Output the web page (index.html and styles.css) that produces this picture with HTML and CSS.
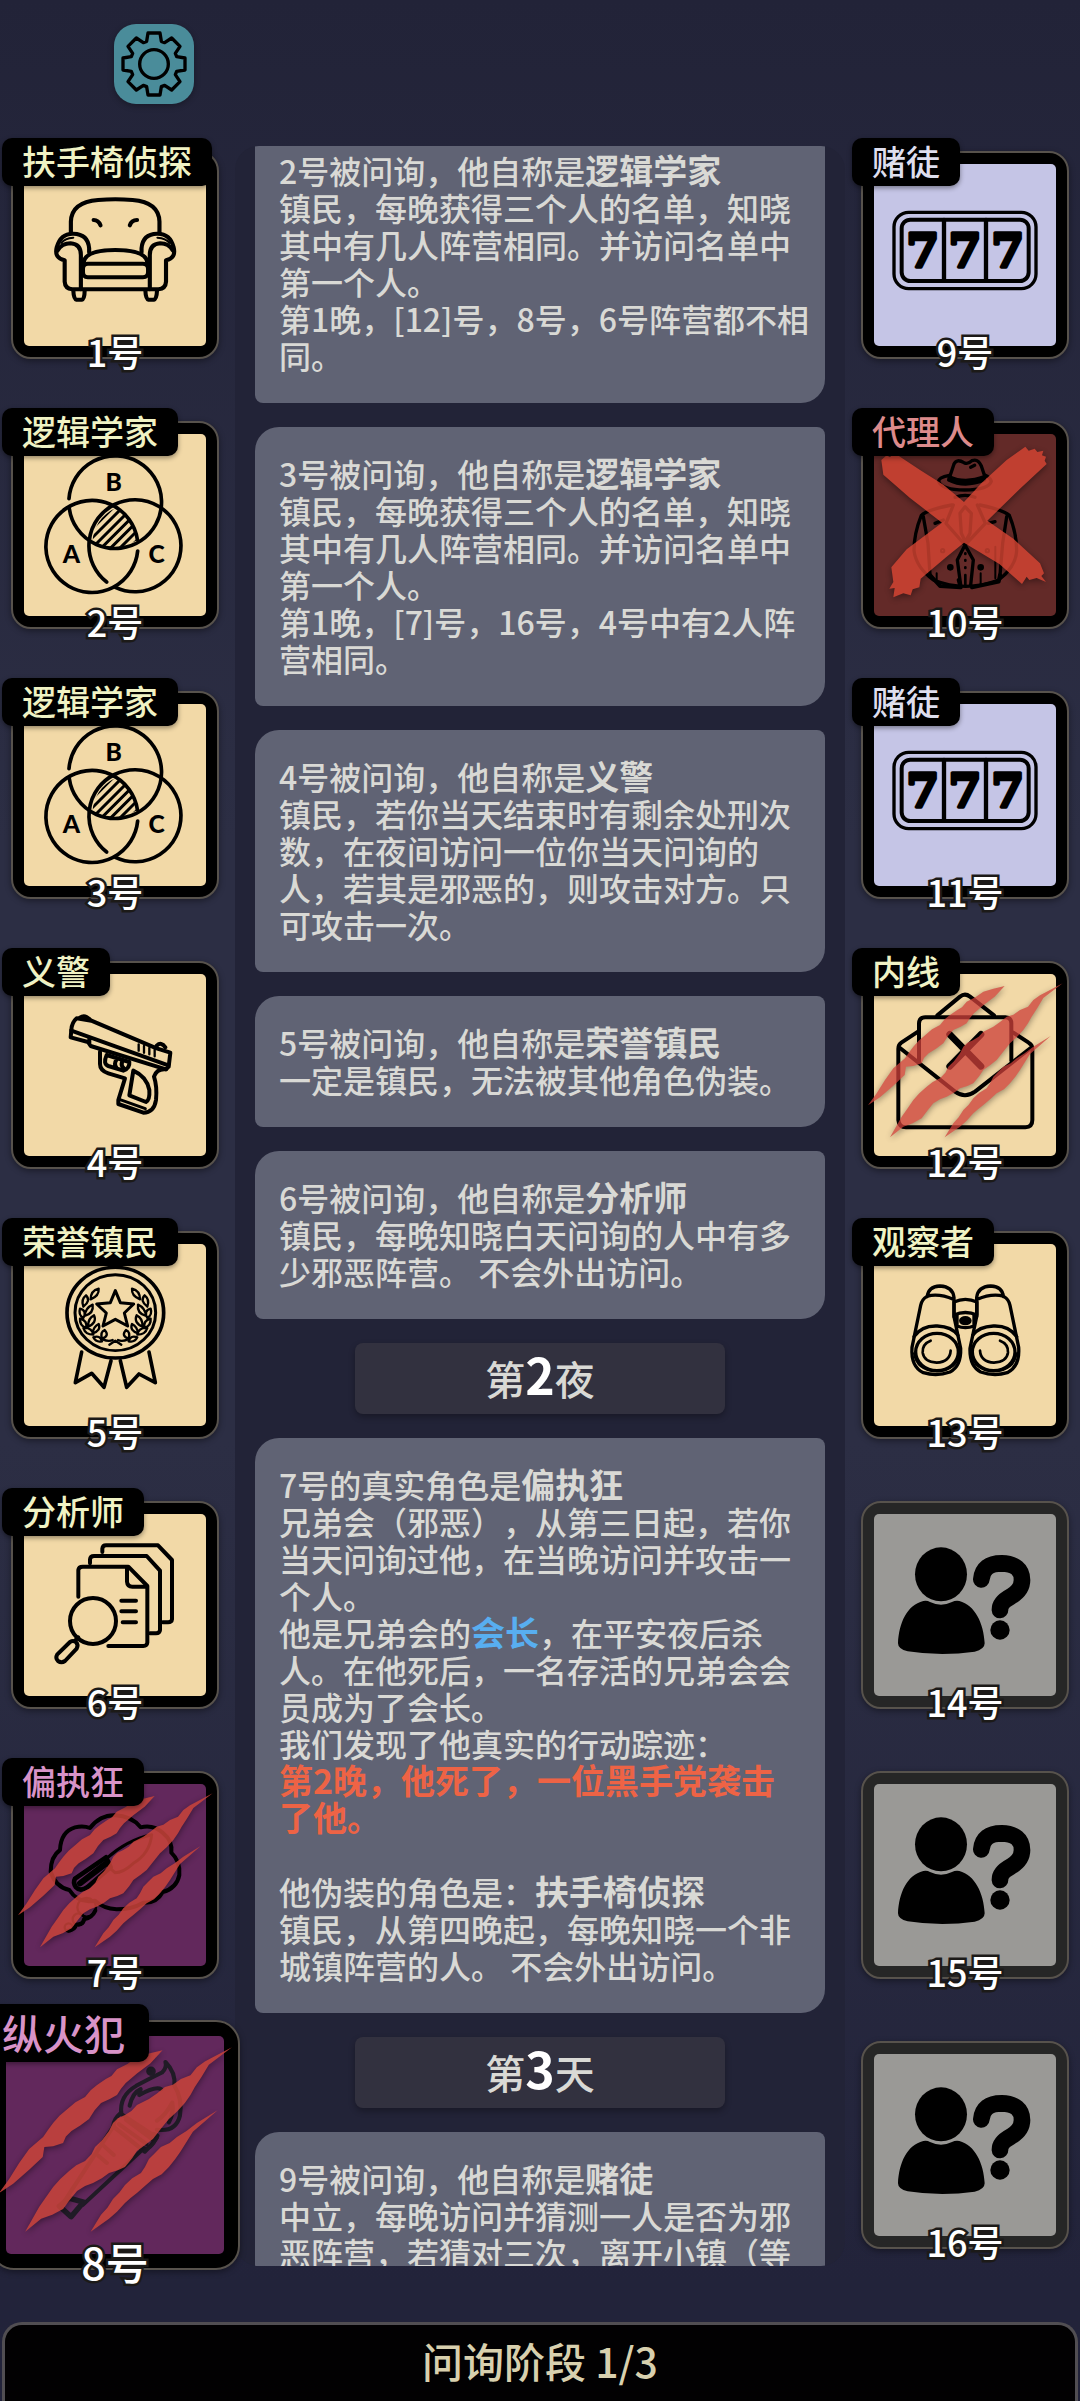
FILE: index.html
```html
<!DOCTYPE html>
<html lang="zh-CN">

<head>
    <meta charset="UTF-8">
    <meta name="viewport" content="width=device-width, initial-scale=1">
    <title>问询阶段</title>
    <link rel="stylesheet" href="styles.css">
</head>

<body>

    <!-- Iconos compartidos -->
    <svg class="sprites" aria-hidden="true">
        <symbol id="i-gear" viewBox="0 0 240 240">
            <g class="line" stroke-width="10" transform="translate(120 120)">
                <path d="M-22-68L-18-93H18L22-68L32-64L53-78L78-53L64-32L68-22L93-18V18L68 22L64 32L78 53L53 78L32 64L22 68L18 93H-18L-22 68L-32 64L-53 78L-78 53L-64 32L-68 22L-93 18V-18L-68-22L-64-32L-78-53L-53-78L-32-64Z"/>
                <circle r="43"/>
            </g>
        </symbol>

        <symbol id="i-armchair" viewBox="70 492 528 546" preserveAspectRatio="none">
            <g class="line" stroke-width="12">
                <path d="M206 696V665Q208 606 285 600Q335 596 385 600Q461 606 463 665V696"/>
                <path d="M272 660Q286 660 292 676M398 660Q382 660 377 676"/>
                <path d="M259 757V745Q256 702 213 701Q176 700 165 742Q157 775 188 781V845Q189 866 210 868H460Q481 866 482 845V781Q512 775 504 742Q494 700 456 701Q414 702 411 745V757"/>
                <path d="M167 752Q180 730 205 730Q235 732 235 765V868M502 752Q490 730 465 730Q435 732 435 765V868"/>
                <path d="M178 729Q188 715 213 713M492 729Q482 715 457 713" stroke-width="6"/>
                <path d="M243 788Q247 750 335 750Q424 750 428 788"/>
                <path d="M255 791H415Q430 792 430 806V816Q430 832 415 832H255Q241 832 241 816V806Q241 792 255 791Z"/>
                <path d="M213 870Q214 898 222 899H238Q246 898 246 870M422 870Q423 898 431 899H447Q455 898 456 870"/>
            </g>
        </symbol>

        <symbol id="i-venn" viewBox="72 102 546 546">
            <clipPath id="venn-core">
                <path d="M345 325Q285 355 277 424Q345 462 412 420Q405 360 345 325Z"/>
            </clipPath>
            <g class="line" stroke-width="11">
                <path d="M207 296A139 139 0 1 1 208 326"/>
                <path d="M413 453A138 138 0 1 1 412 418"/>
                <path d="M320 546A138 138 0 1 1 346 562"/>
                <path clip-path="url(#venn-core)" d="M262 400L372 290M262 428L402 288M270 450L430 290M298 450L438 310M326 450L466 310M354 450L494 310M382 450L522 310" stroke-width="9"/>
            </g>
            <g class="venn-letters">
                <text x="341" y="274">B</text>
                <text x="214" y="489">A</text>
                <text x="470" y="489">C</text>
            </g>
        </symbol>

        <symbol id="i-gun" viewBox="72 102 546 546">
            <g class="line" stroke-width="12">
                <path d="M230 235Q215 248 214 270L212 292L264 306L272 318L498 388L506 380L511 338L470 325L274 242Z"/>
                <path d="M214 272L505 376M268 292V308"/>
                <path d="M240 233Q254 222 270 239M470 317Q484 304 496 322"/>
                <path d="M300 335V372Q300 392 325 400L375 415L355 480V492L430 518Q462 518 468 480Q472 440 462 410Q470 385 498 388"/>
                <path d="M358 478L436 506" stroke-width="9"/>
                <path d="M400 392L388 466L438 486Q450 480 448 450Q440 410 400 392Z"/>
                <path d="M320 345Q308 372 325 378L370 392Q390 385 388 366ZM350 358Q340 372 350 384M366 366Q362 378 372 386"/>
                <path d="M416 313V332M432 318V338M448 324V343M464 329V349" stroke-width="7"/>
            </g>
        </symbol>

        <symbol id="i-medal" viewBox="72 912 546 546">
            <g class="line" stroke-width="11">
                <circle cx="346" cy="1118" r="145" transform="matrix(1 0 0 .94 0 67)"/>
                <circle cx="346" cy="1118" r="121" transform="matrix(1 0 0 .94 0 67)" stroke-width="9"/>
                <path d="M346 1052L361 1088L401 1092L373 1119L383 1158L346 1138L309 1158L319 1119L290 1092L331 1088Z" stroke-width="9"/>
                <path d="M245 1236L226 1328L275 1300L312 1342L333 1262M447 1236L466 1328L417 1302L380 1342L361 1262"/>
                <g id="laurel" stroke-width="7">
                    <path d="M272 1078Q272 1052 296 1046Q298 1068 272 1078ZM250 1100Q242 1078 258 1066Q274 1082 250 1100ZM254 1128Q256 1104 278 1094Q282 1120 254 1128ZM250 1134Q234 1124 240 1106Q262 1112 250 1134ZM264 1160Q264 1134 282 1126Q292 1148 264 1160ZM258 1164Q238 1156 240 1136Q264 1142 258 1164ZM278 1180Q280 1160 296 1152Q304 1172 278 1180ZM280 1184Q256 1184 250 1164Q276 1162 280 1184ZM306 1196Q300 1176 314 1170Q330 1188 306 1196ZM306 1204Q288 1208 280 1192Q300 1184 306 1204Z"/>
                    <path d="M308 1198Q326 1206 338 1200"/>
                </g>
                <use href="#laurel" transform="matrix(-1 0 0 1 692 0)"/>
                <path d="M328 1214L346 1202L364 1214" stroke-width="7"/>
            </g>
        </symbol>

        <symbol id="i-files" viewBox="72 102 546 546">
            <g class="line" stroke-width="12">
                <path d="M235 350V270Q236 260 248 260H385L442 318V488Q441 498 430 498H325"/>
                <path d="M381 264V305Q382 320 397 320H438"/>
                <path d="M270 250V238Q271 228 282 228H440L480 272V450Q479 460 468 460H450"/>
                <path d="M307 216V206Q308 196 318 196H474L516 240V418Q515 427 504 427H488"/>
                <path d="M364 362H408M364 394H408M368 427H408"/>
                <circle cx="279" cy="423" r="69"/>
                <path d="M210 486L172 523Q165 535 174 543Q184 550 195 543L230 506Q236 494 228 487Q220 480 210 486Z"/>
                <path d="M225 482L235 472"/>
            </g>
        </symbol>

        <symbol id="i-knife" viewBox="72 912 546 546">
            <g class="line" stroke-width="12">
                <path d="M180 1110Q182 1055 225 1042Q250 1036 270 1044Q300 1005 345 1006Q395 1008 422 1042Q460 1032 490 1060Q518 1082 514 1118Q542 1145 538 1185Q530 1225 488 1236Q470 1270 430 1268Q395 1288 350 1288Q310 1286 285 1262Q235 1272 208 1230Q165 1220 152 1175Q152 1130 180 1110Z"/>
                <path d="M320 1135Q380 1080 455 1064Q450 1120 400 1150Q370 1178 345 1178L325 1160" stroke-width="9"/>
                <path d="M225 1196L318 1132L332 1162L262 1222Q240 1236 228 1222Q218 1208 225 1196Z" stroke-width="14"/>
                <path d="M240 1210L316 1152" stroke-width="18"/>
                <circle cx="260" cy="1282" r="28" stroke-width="7"/>
                <circle cx="236" cy="1318" r="18" stroke-width="7"/>
                <circle cx="206" cy="1342" r="12" stroke-width="7"/>
                <path d="M205 1352Q225 1350 228 1334Q250 1334 252 1318Q276 1314 286 1292"/>
            </g>
        </symbol>

        <symbol id="i-torch" viewBox="17 140 633 656" preserveAspectRatio="none">
            <g class="line torch" stroke-width="12">
                <path d="M352 375Q345 320 395 290Q440 265 470 250Q485 235 480 218Q510 250 506 290Q530 330 522 380Q510 430 455 422"/>
                <path d="M376 350Q385 310 408 300L404 318Q450 290 468 300M490 400Q505 370 500 340Q480 380 455 395"/>
                <circle cx="438" cy="246" r="8" fill="#201b26"/>
                <path d="M350 372Q330 390 328 412L420 488Q440 470 455 445L352 375M345 405L425 465M365 392L440 450"/>
                <path d="M330 410L185 640M410 485L240 648M300 470L330 498M285 500L310 522"/>
                <path d="M172 652L200 628L242 640L206 684Z" stroke-width="16"/>
                <path d="M414 474Q436 490 458 440Q446 426 430 440" stroke-width="10"/>
            </g>
        </symbol>

        <symbol id="i-slots" viewBox="102 102 546 546">
            <g class="line">
                <rect x="162" y="247" width="426" height="229" rx="44" stroke-width="10"/>
                <rect x="185" y="269" width="381" height="184" rx="26" stroke-width="12"/>
                <path d="M312 270V452M438 270V452" stroke-width="13"/>
            </g>
            <g class="sevens">
                <text x="248" y="412">7</text>
                <text x="375" y="412">7</text>
                <text x="503" y="412">7</text>
            </g>
        </symbol>

        <symbol id="i-agent" viewBox="102 912 546 546">
            <g class="line" stroke-width="10">
                <path d="M330 1038L342 1002Q350 985 372 998Q384 1004 396 992Q414 985 424 1008L434 1038"/>
                <path d="M328 1036Q296 1042 296 1054Q304 1080 374 1080Q446 1080 454 1054Q450 1042 436 1036"/>
                <path d="M328 1040Q374 1062 434 1040V1050Q374 1074 326 1050Z" fill="#000"/>
                <path d="M392 1012L404 1006"/>
                <path d="M345 1102Q376 1090 405 1102"/>
                <path d="M335 1125Q260 1140 244 1156Q222 1210 222 1262Q228 1312 280 1350Q376 1388 476 1350Q528 1310 530 1262Q530 1210 508 1156Q490 1140 420 1125"/>
                <path d="M250 1160L264 1240L270 1335M500 1160L488 1240L480 1335"/>
                <path d="M340 1125L318 1180L375 1245L436 1180L412 1125M375 1130L360 1150L364 1210L376 1235L390 1210L394 1150Z"/>
                <path d="M375 1245L352 1290L362 1365M375 1245L400 1290L392 1365M285 1180L310 1170M445 1180L465 1175"/>
                <path d="M270 1335L300 1368L362 1372L356 1350M480 1335L476 1355L396 1372" stroke-width="12"/>
                <path d="M290 1330V1350M422 1330V1365M466 1250V1345" stroke-width="6"/>
                <path d="M376 1270V1272M376 1290V1292M376 1312V1314M376 1335V1365" stroke-width="8"/>
                <circle cx="331" cy="1312" r="5"/>
                <circle cx="422" cy="1312" r="5"/>
                <circle cx="308" cy="1262" r="3"/>
                <circle cx="442" cy="1262" r="3"/>
            </g>
        </symbol>

        <symbol id="i-mail" viewBox="102 102 546 546">
            <g class="line" stroke-width="12">
                <path d="M234 275L184 308Q175 314 175 326V540Q177 562 198 562H556Q577 561 577 540V326Q577 314 566 308L520 278"/>
                <path d="M292 226L360 170Q375 158 390 170L462 226"/>
                <path d="M237 368V250Q238 232 256 232H496Q514 233 514 250V362"/>
                <path d="M180 324L345 455Q375 476 405 455L572 324"/>
                <path d="M329 283L423 379M423 283L329 379" stroke-width="20"/>
            </g>
        </symbol>

        <symbol id="i-binoculars" viewBox="102 912 546 546">
            <g class="line" stroke-width="10">
                <g id="barrel">
                    <path d="M262 1070Q264 1040 300 1038Q338 1040 342 1072V1130M262 1068Q300 1060 340 1078"/>
                    <path d="M260 1070Q246 1078 242 1096L216 1222Q212 1280 250 1298Q290 1310 330 1296Q364 1278 362 1225L342 1130"/>
                    <path d="M222 1190Q245 1156 292 1158Q336 1160 354 1186"/>
                    <ellipse cx="291" cy="1236" rx="64" ry="56"/>
                    <path d="M222 1240Q230 1292 290 1294Q350 1292 358 1240" stroke-width="6"/>
                    <path d="M272 1202Q246 1212 248 1238Q252 1266 290 1268Q330 1266 332 1232" stroke-width="8"/>
                </g>
                <use href="#barrel" transform="matrix(-1 0 0 1 752 0)"/>
                <path d="M342 1086Q376 1070 411 1086V1125Q376 1110 342 1125Z"/>
                <path d="M351 1125V1158Q376 1168 402 1158V1125"/>
                <ellipse cx="376" cy="1142" rx="14" ry="9" fill="#000"/>
            </g>
        </symbol>

        <symbol id="i-unknown" viewBox="102 102 546 546">
            <ellipse cx="303" cy="283" rx="78" ry="81"/>
            <path d="M174 490C177 430 200 375 250 363Q262 361 270 366Q303 382 336 366Q346 361 358 363C405 375 431 430 434 490Q434 508 404 515Q304 530 203 514Q174 507 174 490Z"/>
            <path d="M424 298Q428 250 485 250Q546 252 546 300Q546 330 512 350Q479 368 480 390" fill="none" stroke="#000" stroke-width="50" stroke-linecap="round"/>
            <circle cx="480" cy="450" r="29"/>
        </symbol>

        <!-- Marcas de muerto / ejecutado -->
        <symbol id="m-claws" viewBox="72 912 546 546" overflow="visible">
            <path d="M464 948L430 956L400 965L376 982L350 995L336 1012L322 1020L300 1035L284 1048L270 1065L246 1078L220 1100L206 1112L190 1130L178 1146L165 1165L130 1195L105 1230L80 1270L54 1306L90 1282L130 1247L164 1215L168 1190L190 1188L215 1180L222 1164L236 1150L258 1136L280 1120L294 1098L310 1080L332 1070L350 1060L360 1044L372 1030L400 1006L434 980Z"/>
            <path d="M638 940L590 965L570 976L550 990L534 1010L510 1020L490 1034L470 1040L450 1056L430 1070L400 1085L386 1100L370 1110L352 1118L340 1130L330 1150L312 1174L295 1190L286 1208L270 1225L248 1236L230 1250L208 1270L190 1290L172 1316L155 1340L120 1402L160 1370L188 1360L215 1345L232 1322L250 1300L270 1288L290 1280L312 1268L330 1255L352 1248L370 1240L388 1218L400 1200L422 1184L440 1170L462 1142L480 1120L500 1102L520 1080L534 1060L545 1040L562 1014L580 984Z"/>
            <path d="M602 1098L550 1130L524 1150L500 1165L482 1180L460 1190L444 1206L430 1220L420 1240L410 1255L388 1268L370 1285L356 1304L340 1320L326 1342L310 1360L284 1402L330 1370L350 1352L370 1330L384 1318L400 1305L422 1286L440 1270L462 1258L480 1240L496 1220L510 1200L540 1152Z"/>
        </symbol>
        <symbol id="m-cross" viewBox="102 912 546 546" overflow="visible">
            <path d="M124 990L140 976L150 982L162 968L240 1020L310 1064L372 1116L424 1060L500 990L556 950L566 962L584 956L592 966L610 962L606 976L618 980L614 992L620 1002L540 1076L442 1172L520 1226L600 1300L612 1330L604 1338L618 1356L590 1344L568 1350L560 1340L546 1362L478 1302L372 1238L320 1280L242 1346L238 1372L218 1378L212 1396L190 1390L160 1402L164 1374L148 1376L160 1356L154 1312L200 1258L306 1178L210 1104L130 1034Z"/>
        </symbol>
    </svg>

    <header>
        <button class="settings" aria-label="设置"><svg><use href="#i-gear"/></svg></button>
    </header>

    <main>
        <section class="players">
            <button class="player town"><span class="face"><svg><use href="#i-armchair"/></svg></span><span class="role">扶手椅侦探</span><span class="num">1号</span></button>
            <button class="player town"><span class="face"><svg><use href="#i-venn"/></svg></span><span class="role">逻辑学家</span><span class="num">2号</span></button>
            <button class="player town"><span class="face"><svg><use href="#i-venn"/></svg></span><span class="role">逻辑学家</span><span class="num">3号</span></button>
            <button class="player town"><span class="face"><svg><use href="#i-gun"/></svg></span><span class="role">义警</span><span class="num">4号</span></button>
            <button class="player town"><span class="face"><svg><use href="#i-medal"/></svg></span><span class="role">荣誉镇民</span><span class="num">5号</span></button>
            <button class="player town"><span class="face"><svg><use href="#i-files"/></svg></span><span class="role">分析师</span><span class="num">6号</span></button>
            <button class="player brother"><span class="face"><svg><use href="#i-knife"/></svg><svg class="mark"><use href="#m-claws"/></svg></span><span class="role">偏执狂</span><span class="num">7号</span></button>
            <button class="player brother selected"><span class="face"><svg><use href="#i-torch"/></svg><svg class="mark"><use href="#m-claws"/></svg></span><span class="role">纵火犯</span><span class="num">8号</span></button>
        </section>

        <section class="panel">
            <div class="log">
                <article class="msg">2号被问询，他自称是<strong>逻辑学家</strong><br>
                    镇民，每晚获得三个人的名单，知晓其中有几人阵营相同。并访问名单中第一个人。<br>
                    第1晚，[12]号，8号，6号阵营都不相同。</article>

                <article class="msg">3号被问询，他自称是<strong>逻辑学家</strong><br>
                    镇民，每晚获得三个人的名单，知晓其中有几人阵营相同。并访问名单中第一个人。<br>
                    第1晚，[7]号，16号，4号中有2人阵营相同。</article>

                <article class="msg">4号被问询，他自称是<strong>义警</strong><br>
                    镇民，若你当天结束时有剩余处刑次数，在夜间访问一位你当天问询的人，若其是邪恶的，则攻击对方。只可攻击一次。</article>

                <article class="msg">5号被问询，他自称是<strong>荣誉镇民</strong><br>
                    一定是镇民，无法被其他角色伪装。</article>

                <article class="msg">6号被问询，他自称是<strong>分析师</strong><br>
                    镇民，每晚知晓白天问询的人中有多少邪恶阵营。 不会外出访问。</article>

                <h2 class="phase">第<b>2</b>夜</h2>

                <article class="msg">7号的真实角色是<strong>偏执狂</strong><br>
                    兄弟会（邪恶），从第三日起，若你当天问询过他，在当晚访问并攻击一个人。<br>
                    他是兄弟会的<strong class="leader">会长</strong>，在平安夜后杀人。在他死后，一名存活的兄弟会会员成为了会长。<br>
                    我们发现了他真实的行动踪迹：<br>
                    <strong class="death">第2晚，他死了，一位黑手党袭击<br>了他。</strong><br>
                    <br>
                    他伪装的角色是：<strong>扶手椅侦探</strong><br>
                    镇民，从第四晚起，每晚知晓一个非城镇阵营的人。 不会外出访问。</article>

                <h2 class="phase">第<b>3</b>天</h2>

                <article class="msg">9号被问询，他自称是<strong>赌徒</strong><br>
                    中立，每晚访问并猜测一人是否为邪恶阵营，若猜对三次，离开小镇（等</article>
            </div>
        </section>

        <section class="players">
            <button class="player neutral"><span class="face"><svg><use href="#i-slots"/></svg></span><span class="role">赌徒</span><span class="num">9号</span></button>
            <button class="player mafia"><span class="face"><svg><use href="#i-agent"/></svg><svg class="mark"><use href="#m-cross"/></svg></span><span class="role">代理人</span><span class="num">10号</span></button>
            <button class="player neutral"><span class="face"><svg><use href="#i-slots"/></svg></span><span class="role">赌徒</span><span class="num">11号</span></button>
            <button class="player town"><span class="face"><svg><use href="#i-mail"/></svg><svg class="mark"><use href="#m-claws"/></svg></span><span class="role">内线</span><span class="num">12号</span></button>
            <button class="player town"><span class="face"><svg><use href="#i-binoculars"/></svg></span><span class="role">观察者</span><span class="num">13号</span></button>
            <button class="player unknown"><span class="face"><svg><use href="#i-unknown"/></svg></span><span class="num">14号</span></button>
            <button class="player unknown"><span class="face"><svg><use href="#i-unknown"/></svg></span><span class="num">15号</span></button>
            <button class="player unknown"><span class="face"><svg><use href="#i-unknown"/></svg></span><span class="num">16号</span></button>
        </section>
    </main>

    <footer>问询阶段 1/3</footer>

</body>

</html>
```

FILE: styles.css
```css
* {
    box-sizing: border-box;
}

body {
    margin: 0;
    height: 100vh;
    display: flex;
    flex-direction: column;
    overflow: hidden;
    font-family: "Noto Sans CJK SC", sans-serif;
    font-weight: 500;
    text-spacing-trim: space-all;
    background: linear-gradient(#222338, #2c2e44 35%, #2c2e44 60%, #22233a 95%);
}

button {
    font: inherit;
    cursor: pointer;
}

svg {
    display: block;
    width: 100%;
    height: 100%;
    overflow: visible;
}

.sprites {
    position: absolute;
    width: 0;
    height: 0;
}

.line {
    fill: none;
    stroke: #000;
    stroke-linecap: round;
    stroke-linejoin: round;
}

.torch {
    stroke: #201b26;
}

.venn-letters {
    font: 900 74px Lato, sans-serif;
    text-anchor: middle;
}

.sevens {
    font: bold 142px "DejaVu Serif", serif;
    text-anchor: middle;
    stroke: #000;
    stroke-width: 10px;
    stroke-linejoin: round;
}

header {
    padding: 24px 114px 42px;
}

.settings {
    display: block;
    width: 80px;
    height: 80px;
    padding: 0;
    border: none;
    border-radius: 22px;
    background: #4a8c9a;
    box-shadow: 0 2px 6px rgba(0, 0, 0, 0.3);
}

main {
    flex: 1;
    min-height: 0;
    display: grid;
    grid-template-columns: 208px 1fr 208px;
    grid-template-rows: 100%;
    gap: 16px;
    padding: 0 11px;
    margin-bottom: 56px;
}

/* Jugadores */
.players {
    display: flex;
    flex-direction: column;
    gap: 62px;
    padding-top: 5px;
}

.player {
    position: relative;
    flex: none;
    width: 208px;
    height: 208px;
    padding: 11px;
    border: 2px solid #57524c;
    border-radius: 20px;
    background: #000;
    font-size: 34px;
    line-height: 48px;
    box-shadow: 0 2px 6px rgba(0, 0, 0, 0.4);
}

.face {
    display: block;
    position: relative;
    height: 100%;
    border-radius: 5px;
}

.role {
    position: absolute;
    top: -15px;
    left: -11px;
    padding: 0 20px;
    border-radius: 10px;
    background: #000;
    line-height: 46px;
    padding-bottom: 2px;
    white-space: nowrap;
    box-shadow: 0 2px 5px rgba(0, 0, 0, 0.4);
}

.num {
    position: absolute;
    bottom: -18px;
    left: 0;
    width: 100%;
    text-align: center;
    color: white;
    font-size: 36px;
    -webkit-text-stroke: 5px #1c1a18;
    paint-order: stroke fill;
}

.mark {
    position: absolute;
    top: 0;
    left: 0;
    fill: #c8433a;
    opacity: 0.86;
    filter: drop-shadow(0 2px 3px rgba(0, 0, 0, 0.5));
}

.town .face {
    background: #f2d9a7;
}

.town .role {
    color: #f0f2c4;
}

.town .mark {
    fill: #cc403a;
    opacity: 0.76;
}

.neutral .face {
    background: #c5c5e6;
}

.neutral .role {
    color: #dedeee;
}

.brother .face {
    background: #62285c;
}

.brother .role {
    color: #d893c8;
}

.mafia .face {
    background: #632a28;
}

.mafia .role {
    color: #dc8a8b;
}

.mafia .mark {
    fill: #d84533;
    opacity: 0.8;
}

.unknown {
    background: #262626;
}

.unknown .face {
    background: #9a9996;
}

.selected {
    width: 250px;
    height: 250px;
    margin: -21px;
    padding: 14px;
    border-radius: 24px;
    font-size: 41px;
    line-height: 58px;
}

.selected .role {
    top: -18px;
    left: -14px;
    padding: 0 24px 2px;
    line-height: 56px;
}

.selected .num {
    bottom: -22px;
    font-size: 43px;
}

/* Registro */
.panel {
    overflow: hidden;
    padding: 0 20px;
    border-radius: 24px;
    background: #222337;
}

.log {
    display: flex;
    flex-direction: column;
    gap: 24px;
    margin-top: -22px;
}

.msg {
    padding: 28px 14px 29px 24px;
    border-radius: 24px 8px;
    background: #606374;
    color: #d9d9d5;
    font-size: 32px;
    line-height: 37px;
}

.msg strong {
    font-size: 34px;
    line-height: 34px;
}

.msg .leader {
    color: #58aef0;
}

.msg .death {
    color: #ee6345;
}

.phase {
    align-self: center;
    width: 370px;
    height: 71px;
    margin: 0;
    border-radius: 8px;
    background: #32313f;
    color: #d9d9d5;
    font-size: 40px;
    font-weight: 500;
    line-height: 70px;
    text-align: center;
    box-shadow: 0 3px 6px rgba(0, 0, 0, 0.3);
}

.phase b {
    color: white;
    font-size: 50px;
    line-height: 50px;
}

footer {
    margin: 0 2px;
    height: 79px;
    border: 3px solid #514e52;
    border-bottom: none;
    border-radius: 20px 20px 0 0;
    background: #020102;
    color: #d8d0ae;
    font-size: 41px;
    line-height: 70px;
    text-align: center;
}
```
